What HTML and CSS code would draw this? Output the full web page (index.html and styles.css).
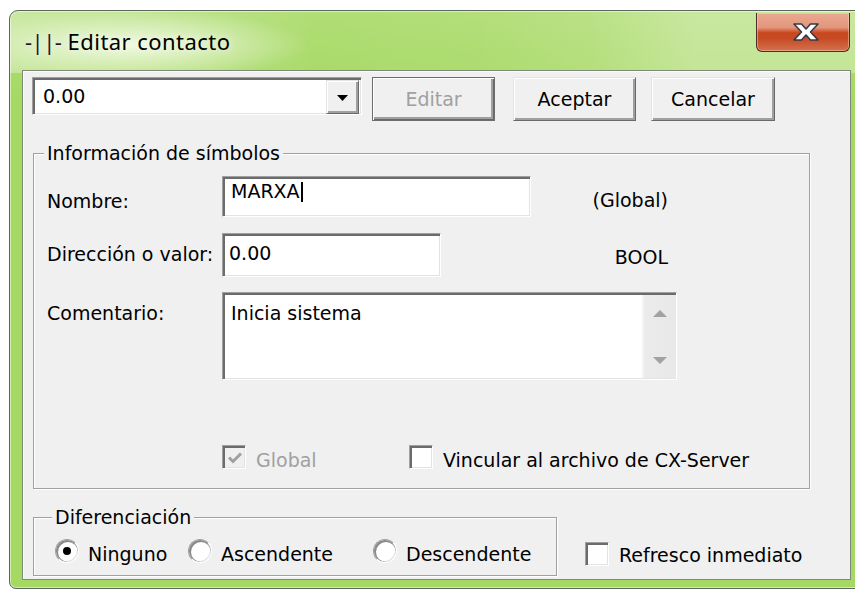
FILE: index.html
```html
<!DOCTYPE html>
<html lang="es">
<head>
<meta charset="utf-8">
<title>Editar contacto</title>
<link rel="stylesheet" href="styles.css">
</head>
<body>
<div class="window">
  <div class="titlebar">
    <span class="title"><span class="rung">-||-</span> Editar contacto</span>
    <button class="close" aria-label="Cerrar">
      <svg width="30" height="20" viewBox="0 0 30 20">
        <polygon points="3,2 10.5,2 15,7 19.5,2 27,2 19.5,10 27,18 19.5,18 15,13 10.5,18 3,18 10.5,10" fill="#fff" stroke="#333a48" stroke-width="1.6" stroke-linejoin="round"/>
      </svg>
    </button>
  </div>

  <div class="client">
    <div class="toolbar">
      <div class="combo sunken">
        <span class="combo-value">0.00</span>
        <span class="combo-btn raised">
          <svg width="11" height="6" viewBox="0 0 11 6"><polygon points="0,0 11,0 5.5,6" fill="#000"/></svg>
        </span>
      </div>
      <button class="btn btn-default" disabled>Editar</button>
      <button class="btn btn-ok">Aceptar</button>
      <button class="btn btn-cancel">Cancelar</button>
    </div>

    <fieldset class="group group-symbols">
      <legend>Información de símbolos</legend>

      <div class="field-row row-name">
        <span class="label">Nombre:</span>
        <div class="edit sunken edit-name">MARXA<span class="caret"></span></div>
        <span class="side">(Global)</span>
      </div>

      <div class="field-row row-addr">
        <span class="label">Dirección o valor:</span>
        <div class="edit sunken edit-addr">0.00</div>
        <span class="side">BOOL</span>
      </div>

      <div class="field-row row-comment">
        <span class="label">Comentario:</span>
        <div class="memo sunken">
          <div class="memo-text">Inicia sistema</div>
          <div class="scrollbar">
            <svg width="14" height="7" viewBox="0 0 14 7"><polygon points="0,7 14,7 7,0" fill="#a2a2a2"/></svg>
            <svg width="14" height="7" viewBox="0 0 14 7"><polygon points="0,0 14,0 7,7" fill="#a2a2a2"/></svg>
          </div>
        </div>
      </div>

      <div class="check-row">
        <span class="check check-global disabled">
          <span class="box sunken">
            <svg width="16" height="14" viewBox="0 0 16 14"><polyline points="2,6.5 6,10.5 14,2.5" fill="none" stroke="#a0a0a0" stroke-width="3"/></svg>
          </span>
          <span class="check-text">Global</span>
        </span>
        <span class="check">
          <span class="box sunken"></span>
          <span class="check-text">Vincular al archivo de CX-Server</span>
        </span>
      </div>
    </fieldset>

    <div class="bottom-row">
      <fieldset class="group group-diff">
        <legend>Diferenciación</legend>
        <div class="radio-row">
          <span class="radio radio-none"><span class="dot checked"></span><span class="radio-text">Ninguno</span></span>
          <span class="radio radio-asc"><span class="dot"></span><span class="radio-text">Ascendente</span></span>
          <span class="radio"><span class="dot"></span><span class="radio-text">Descendente</span></span>
        </div>
      </fieldset>
      <span class="check check-refresh">
        <span class="box sunken"></span>
        <span class="check-text">Refresco inmediato</span>
      </span>
    </div>
  </div>
</div>
</body>
</html>
```

FILE: styles.css
```css
* { box-sizing: border-box; }

html, body { margin: 0; }

body {
  width: 855px;
  height: 590px;
  overflow: hidden;
  background: #fff;
  font-family: "DejaVu Sans", Verdana, sans-serif;
  font-size: 19px;
  line-height: 22px;
  color: #000;
}

/* ---------- window frame (Aero, green tint) ---------- */
.window {
  margin: 10px 0 0 9px;
  width: 855px;
  height: 579px;
  border: 1px solid #5d665a;
  border-radius: 9px 9px 0 7px;
  padding: 0 12px 8px;
  display: flex;
  flex-direction: column;
  background:
    radial-gradient(ellipse 180px 36px at 120px 34px, rgba(244,251,232,.92), rgba(244,251,232,0)),
    linear-gradient(to right, rgba(255,255,255,.32) 0%, rgba(255,255,255,.12) 24%, rgba(255,255,255,0) 36%, rgba(255,255,255,.04) 55%, rgba(255,255,255,.12) 68%, rgba(255,255,255,.3) 80%, rgba(255,255,255,.3) 100%) top left / 100% 62px no-repeat,
    linear-gradient(to bottom, rgba(255,255,255,.12), rgba(255,255,255,0) 90px),
    #a6d963;
  box-shadow: inset 0 0 0 1px rgba(255,255,255,.5);
}

.titlebar {
  height: 59px;
  display: flex;
  align-items: flex-start;
  flex: none;
}

.title {
  margin: 16px 0 0 3px;
  font-family: "Noto Sans", "Open Sans", sans-serif;
  font-size: 22px;
  letter-spacing: .45px;
  line-height: 28px;
  color: #000;
  text-shadow: 0 0 8px rgba(255,255,255,.9);
}

.rung { color: #2a1530; letter-spacing: -.5px; }

.close {
  margin: 2px 1px 0 auto;
  width: 94px;
  height: 39px;
  padding: 0 0 0 6px;
  border: 1px solid #4a2d24;
  border-top: none;
  border-radius: 0 0 6px 6px;
  display: flex;
  align-items: center;
  justify-content: center;
  background: linear-gradient(to bottom, #eaa993 0%, #e2977b 38%, #c9481f 52%, #c64a24 66%, #d4714f 100%);
  box-shadow: inset 0 0 0 1px rgba(255,220,200,.45);
}

/* ---------- client area ---------- */
.client {
  height: 510px;
  flex: none;
  border: 1px solid #7d8a76;
  background: #f0f0f0;
  padding: 6px 9px 0;
  box-shadow: inset 1px 1px #fbfbfb;
}

/* classic 3D edges */
.sunken {
  border: 1px solid;
  border-color: #a0a0a0 #fff #fff #a0a0a0;
  box-shadow: inset 2px 2px 0 #6b6b6b, inset -1px -1px 0 #e3e3e3;
  background: #fff;
}

.raised {
  border: 1px solid;
  border-color: #e3e3e3 #696969 #696969 #e3e3e3;
  box-shadow: inset 1px 1px #fff, inset -2px -2px #a0a0a0;
  background: #f0f0f0;
}

/* ---------- top row ---------- */
.toolbar {
  display: flex;
  align-items: flex-start;
}

.combo {
  width: 330px;
  height: 38px;
  padding: 2px;
  display: flex;
  flex: none;
}

.combo-value {
  flex: 1;
  padding: 5px 0 0 8px;
}

.combo-btn {
  width: 33px;
  height: 34px;
  display: flex;
  align-items: center;
  justify-content: center;
  padding-top: 2px;
}

.btn {
  width: 123px;
  height: 44px;
  flex: none;
  padding: 0;
  font: inherit;
  color: #000;
  background: #f0f0f0;
  border: 1px solid;
  border-color: #e3e3e3 #696969 #696969 #e3e3e3;
  box-shadow: inset 1px 1px #fff, inset -2px -2px #a0a0a0;
}

.btn-default {
  margin-left: 10px;
  border-color: #6d6d6d;
  box-shadow: inset 1px 1px #fff, inset -1px -1px #696969, inset -3px -3px #a0a0a0;
  color: #a0a0a0;
}

.btn-ok { margin-left: 18px; }
.btn-cancel { margin-left: 15px; width: 124px; }

/* ---------- group boxes ---------- */
.group {
  margin: 21px 0 0 1px;
  min-width: 0;
  border: 1px solid #a0a0a0;
  box-shadow: inset 1px 1px #fff, 1px 1px #fff;
}

.group legend {
  margin-left: -3px;
  padding: 0 3px;
  line-height: 22px;
  background: #f0f0f0;
}

.group-symbols {
  width: 777px;
  padding: 0 0 17px 13px;
}

.field-row {
  display: flex;
  align-items: flex-start;
  width: 621px;
}

.label {
  width: 175px;
  flex: none;
}

.side {
  margin-left: auto;
  padding-top: 13px;
}

.edit { padding-left: 8px; flex: none; }

.row-name { margin-top: 12px; }
.row-name .label { padding-top: 14px; }
.edit-name {
  width: 309px;
  height: 41px;
  padding-top: 3px;
}

.caret {
  display: inline-block;
  width: 2px;
  height: 20px;
  margin: 2px 0 0 1px;
  vertical-align: top;
  background: #000;
}

.row-addr { margin-top: 16px; }
.row-addr .label { padding-top: 10px; }
.edit-addr {
  width: 219px;
  height: 44px;
  padding: 8px 0 0 6px;
}

.row-comment { margin-top: 15px; }
.row-comment .label { padding-top: 10px; }

.memo {
  width: 455px;
  height: 88px;
  flex: none;
  display: flex;
  padding: 2px 0 1px;
}

.memo-text {
  flex: 1;
  padding: 7px 0 0 8px;
}

.scrollbar {
  width: 34px;
  flex: none;
  display: flex;
  flex-direction: column;
  align-items: center;
  justify-content: space-between;
  padding: 15px 0 14px 1px;
  background: linear-gradient(to right, #f7f7f7 0, #ebebeb 3px, #e8e8e8 100%);
}

.check-row {
  display: flex;
  margin-top: 65px;
  padding-left: 175px;
}

.check {
  display: flex;
  align-items: flex-start;
}

.check-global { width: 187px; }

.box {
  width: 24px;
  height: 24px;
  flex: none;
  display: flex;
  align-items: center;
  justify-content: center;
  padding: 1px 0 0 1px;
}

.check-text {
  margin-left: 10px;
  padding-top: 4px;
}

.disabled .box { background: #f0f0f0; }
.disabled .check-text { color: #a0a0a0; }

/* ---------- bottom row ---------- */
.bottom-row {
  display: flex;
  align-items: flex-start;
  margin-top: 17px;
}

.group-diff {
  margin-top: 0;
  width: 524px;
  flex: none;
  padding: 0 0 10px 21px;
}

.radio-row {
  display: flex;
  margin-top: 11px;
}

.radio {
  display: flex;
  align-items: flex-start;
}

.radio-none { width: 133px; }
.radio-asc { width: 185px; }

.dot {
  width: 24px;
  height: 24px;
  flex: none;
  border-radius: 50%;
  border: 1px solid;
  border-color: #a0a0a0 #fff #fff #a0a0a0;
  box-shadow: inset 1px 1px 0 1px #8a8a8a, inset -1px -1px 0 #e3e3e3;
  background: #fff;
  display: flex;
  align-items: center;
  justify-content: center;
}

.dot.checked::after {
  content: "";
  width: 8px;
  height: 8px;
  border-radius: 50%;
  background: #000;
}

.radio-text {
  margin-left: 9px;
  padding-top: 4px;
}

.check-refresh {
  margin: 36px 0 0 28px;
}

.check-refresh .check-text { padding-top: 2px; }
```
